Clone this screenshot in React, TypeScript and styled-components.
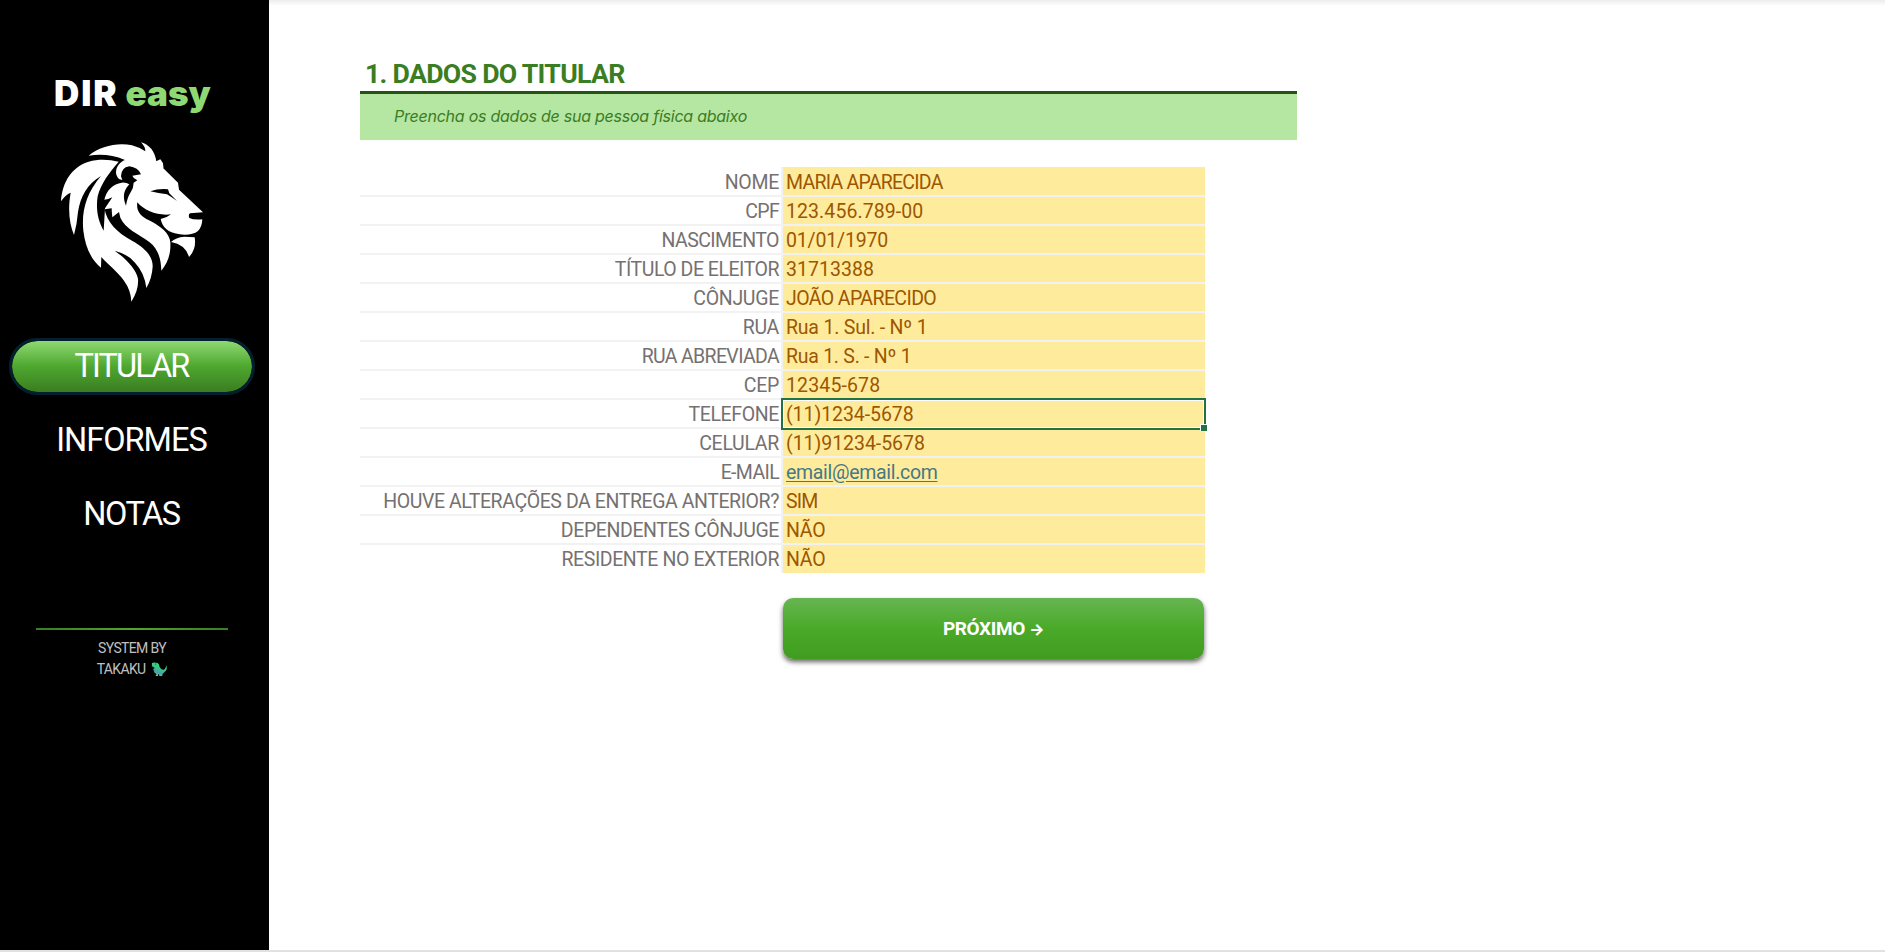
import React from "react";
import styled, { createGlobalStyle } from "styled-components";

const Global = createGlobalStyle`
  * { box-sizing: border-box; }
  body { margin: 0; background: #fff; font-family: Roboto, "Open Sans", sans-serif; overflow: hidden; }
`;

const Page = styled.div`
  display: flex;
  height: 952px;
  width: 1885px;
  background: linear-gradient(#ececec, #fff 6px) no-repeat, #fff;
  border-bottom: 2px solid #e1e1e1;
`;

const Sidebar = styled.aside`
  width: 269px;
  height: 950px;
  background: #000;
  display: flex;
  flex-direction: column;
  padding: 72px 0 0 9px;
`;

const Brand = styled.h1`
  margin: 0;
  padding-left: 45px;
  height: 42px;
  font: 900 35px/43px Inter, sans-serif;
  letter-spacing: 1.9px;
  word-spacing: -2px;
  color: #fff;
  white-space: nowrap;
  span { color: #8ed973; letter-spacing: 0; }
`;

const Logo = styled.svg`
  margin: 16px 0 0 41px;
  width: 160px;
  height: 180px;
`;

const Nav = styled.nav`
  display: flex;
  flex-direction: column;
  gap: 17px;
  width: 246px;
  margin-top: 28px;
`;

const NavItem = styled.button<{ $active?: boolean; $spacing: number }>`
  height: 57px;
  border: 3px solid ${(p) => (p.$active ? "#04202f" : "transparent")};
  border-radius: 29px;
  background: ${(p) => (p.$active ? "linear-gradient(#8ed973, #4ea72e 50%, #3a7d22) padding-box" : "transparent")};
  color: #fff;
  font: 400 32.5px/48px Roboto, sans-serif;
  letter-spacing: ${(p) => p.$spacing}px;
  padding: 0 1px 1px 0;
`;

const Credits = styled.footer`
  width: 192px;
  margin: 85px 0 0 27px;
  padding-top: 8px;
  border-top: 2px solid;
  border-image: linear-gradient(90deg, #3a7d22, #4ea72e, #3a7d22) 1;
  color: #c0c0c0;
  font-size: 14px;
  line-height: 21px;
  letter-spacing: -0.65px;
  text-align: center;
  svg { width: 16px; height: 15px; vertical-align: -3px; margin-left: 3px; }
`;

const Sheet = styled.main`
  padding: 53px 0 0 91px;
`;

const Title = styled.h2`
  margin: 0;
  width: 937px;
  height: 41px;
  padding-left: 5px;
  border-bottom: 3px solid #275317;
  color: #3a7d22;
  font: 700 26.7px/43px Roboto, sans-serif;
  letter-spacing: -0.7px;
`;

const Hint = styled.p`
  margin: 0;
  width: 937px;
  height: 46px;
  padding-left: 34px;
  background: #b5e6a2;
  color: #3a7d22;
  font: italic 400 16px/45px Inter, sans-serif;
  letter-spacing: -0.24px;
`;

const Form = styled.div`
  margin-top: 27px;
  width: 845px;
`;

const Label = styled.label<{ $spacing: number }>`
  border-bottom: 2px solid #f2f2f2;
  padding-right: 2px;
  color: #757171;
  text-align: right;
  font-size: 19.5px;
  line-height: 30px;
  letter-spacing: ${(p) => p.$spacing - 0.29}px;
  white-space: nowrap;
`;

const Value = styled.div<{ $spacing: number }>`
  position: relative;
  border-left: 2px solid #f2f2f2;
  border-bottom: 2px solid #f2f2f2;
  padding-left: 3px;
  background: #ffeb9c padding-box;
  color: #9c5700;
  font-size: 19.5px;
  line-height: 30px;
  letter-spacing: ${(p) => p.$spacing - 0.26}px;
  white-space: nowrap;
  a { color: #467886; text-underline-offset: 2px; }
`;

const Row = styled.div`
  display: grid;
  grid-template-columns: 421px 424px;
  grid-template-rows: 100%;
  height: 29px;
  &:first-child { height: 30px; }
  &:first-child > * { padding-top: 1px; }
  &:last-child { height: 28px; }
  &:last-child > * { border-bottom: 0; }
`;

const Selection = styled.i`
  position: absolute;
  inset: -2px -1px -3px -2px;
  border: 2px solid #217346;
  box-shadow: inset 0 0 0 1px #fff;
  z-index: 1;
  &::after {
    content: "";
    position: absolute;
    right: -3px;
    bottom: -3px;
    width: 6px;
    height: 6px;
    background: #217346;
    border: solid #fff;
    border-width: 1px 0 0 1px;
  }
`;

const Next = styled.button`
  display: block;
  margin: 25px 0 0 423px;
  width: 421px;
  height: 61px;
  border: 0;
  border-radius: 10px;
  background: linear-gradient(#66b552, #4aaa28 50%, #409c1f);
  box-shadow: 0 3px 5px rgba(0, 0, 0, 0.6);
  color: #fff;
  font: 700 19px/61px Roboto, sans-serif;
  letter-spacing: -0.4px;
  padding: 0;
  span { font: 800 16px Inter, sans-serif; }
`;

// label, value, label tracking, value tracking
const rows: [string, string, number, number][] = [
  ["NOME", "MARIA APARECIDA", 0, -0.48],
  ["CPF", "123.456.789-00", -0.4, 0.34],
  ["NASCIMENTO", "01/01/1970", -0.24, 0.1],
  ["TÍTULO DE ELEITOR", "31713388", -0.19, 0.3],
  ["CÔNJUGE", "JOÃO APARECIDO", 0, -0.34],
  ["RUA", "Rua 1. Sul. - Nº 1", 0, 0.06],
  ["RUA ABREVIADA", "Rua 1. S. - Nº 1", -0.37, 0],
  ["CEP", "12345-678", 0, 0.4],
  ["TELEFONE", "(11)1234-5678", -0.08, 0.2],
  ["CELULAR", "(11)91234-5678", 0, 0.22],
  ["E-MAIL", "email@email.com", -0.35, -0.05],
  ["HOUVE ALTERAÇÕES DA ENTREGA ANTERIOR?", "SIM", -0.13, -0.6],
  ["DEPENDENTES CÔNJUGE", "NÃO", -0.1, 0],
  ["RESIDENTE NO EXTERIOR", "NÃO", -0.11, 0],
];

const Lion = () => (
  <Logo viewBox="0 0 480 540" fill="#fff">
    <path d="M116 77C150 48 205 36 246 46Q268 52 286 64Q286 50 273 37C298 44 315 64 319 94Q327 90 331 88Q342 99 340 115L384 158L387 179L459 247L420 250Q414 254 418 264Q430 270 457 268Q456 291 444 303C430 314 407 316 385 312C355 307 338 294 332 267Q350 264 363 253C325 258 283 243 262 217C258 245 273 259 297 271C333 289 358 309 361 337C363 370 354 398 334 422C333 388 326 358 298 336C264 311 225 296 211 263L207 246L187 262Q185 246 185 235L164 238C170 275 201 309 246 332C290 356 309 383 308 410Q306 445 289 474Q284 429 255 398Q235 373 194 362C232 389 259 420 264 446Q267 479 244 515Q243 481 222 452C202 424 175 405 154 381L153 413C127 393 106 355 100 302C94 242 109 190 153 138C112 162 91 200 84 246Q81 283 72 315C58 281 53 238 62 188Q46 194 33 214C37 154 67 110 116 95C146 86 178 88 206 95C179 127 153 159 143 199C137 238 144 273 161 302L165 235L187 202Q174 209 163 209C170 179 190 162 215 158Q229 157 238 163C219 183 218 203 228 227Q232 202 242 187Q251 173 251 158L262 151Q250 146 247 137L273 133Q264 112 238 109Q213 113 213 139L217 150Q199 146 198 128C198 109 210 96 225 90C187 73 150 72 116 77Z" />
    <path fill="#000" d="M301 184Q326 175 354 178L358 190L381 213Q366 202 351 193Q325 190 301 184Z" />
    <path d="M363 336Q377 322 403 320L434 322Q440 357 417 381Q407 344 363 336Z" />
  </Logo>
);

const Dino = () => (
  <svg viewBox="0 0 17 16">
    <defs>
      <linearGradient id="skin" x1="0.7" y1="0" x2="0.3" y2="1">
        <stop offset="0.3" stopColor="#35d47d" />
        <stop offset="0.75" stopColor="#4a9fae" />
        <stop offset="0.9" stopColor="#3ae08a" />
      </linearGradient>
    </defs>
    <path fill="url(#skin)" d="M1 1Q3 0 7 1Q9 2 9 5Q11 9 14 8Q16 7 16 3Q18 8 15 10Q12 12 12 15H9L8.500 13H7.500V15H5V14L6 13Q2 11 3 8L1.500 8L4 6.500L1 4.500Z" />
    <circle cx="5" cy="2.200" r="0.600" fill="#173f3c" />
  </svg>
);

export default function App() {
  return (
    <Page>
      <Global />
      <Sidebar>
        <Brand>DIR <span>easy</span></Brand>
        <Lion />
        <Nav>
          <NavItem $active $spacing={-1.9}>TITULAR</NavItem>
          <NavItem $spacing={-1}>INFORMES</NavItem>
          <NavItem $spacing={-1.5}>NOTAS</NavItem>
        </Nav>
        <Credits>
          SYSTEM BY<br />TAKAKU <Dino />
        </Credits>
      </Sidebar>
      <Sheet>
        <Title>1. DADOS DO TITULAR</Title>
        <Hint>Preencha os dados de sua pessoa física abaixo</Hint>
        <Form>
          {rows.map(([label, value, ls, vs]) => (
            <Row key={label}>
              <Label $spacing={ls}>{label}</Label>
              <Value $spacing={vs}>
                {value.includes("@") ? <a href="#mail">{value}</a> : value}
                {label === "TELEFONE" && <Selection />}
              </Value>
            </Row>
          ))}
        </Form>
        <Next>PRÓXIMO <span>→</span></Next>
      </Sheet>
    </Page>
  );
}
